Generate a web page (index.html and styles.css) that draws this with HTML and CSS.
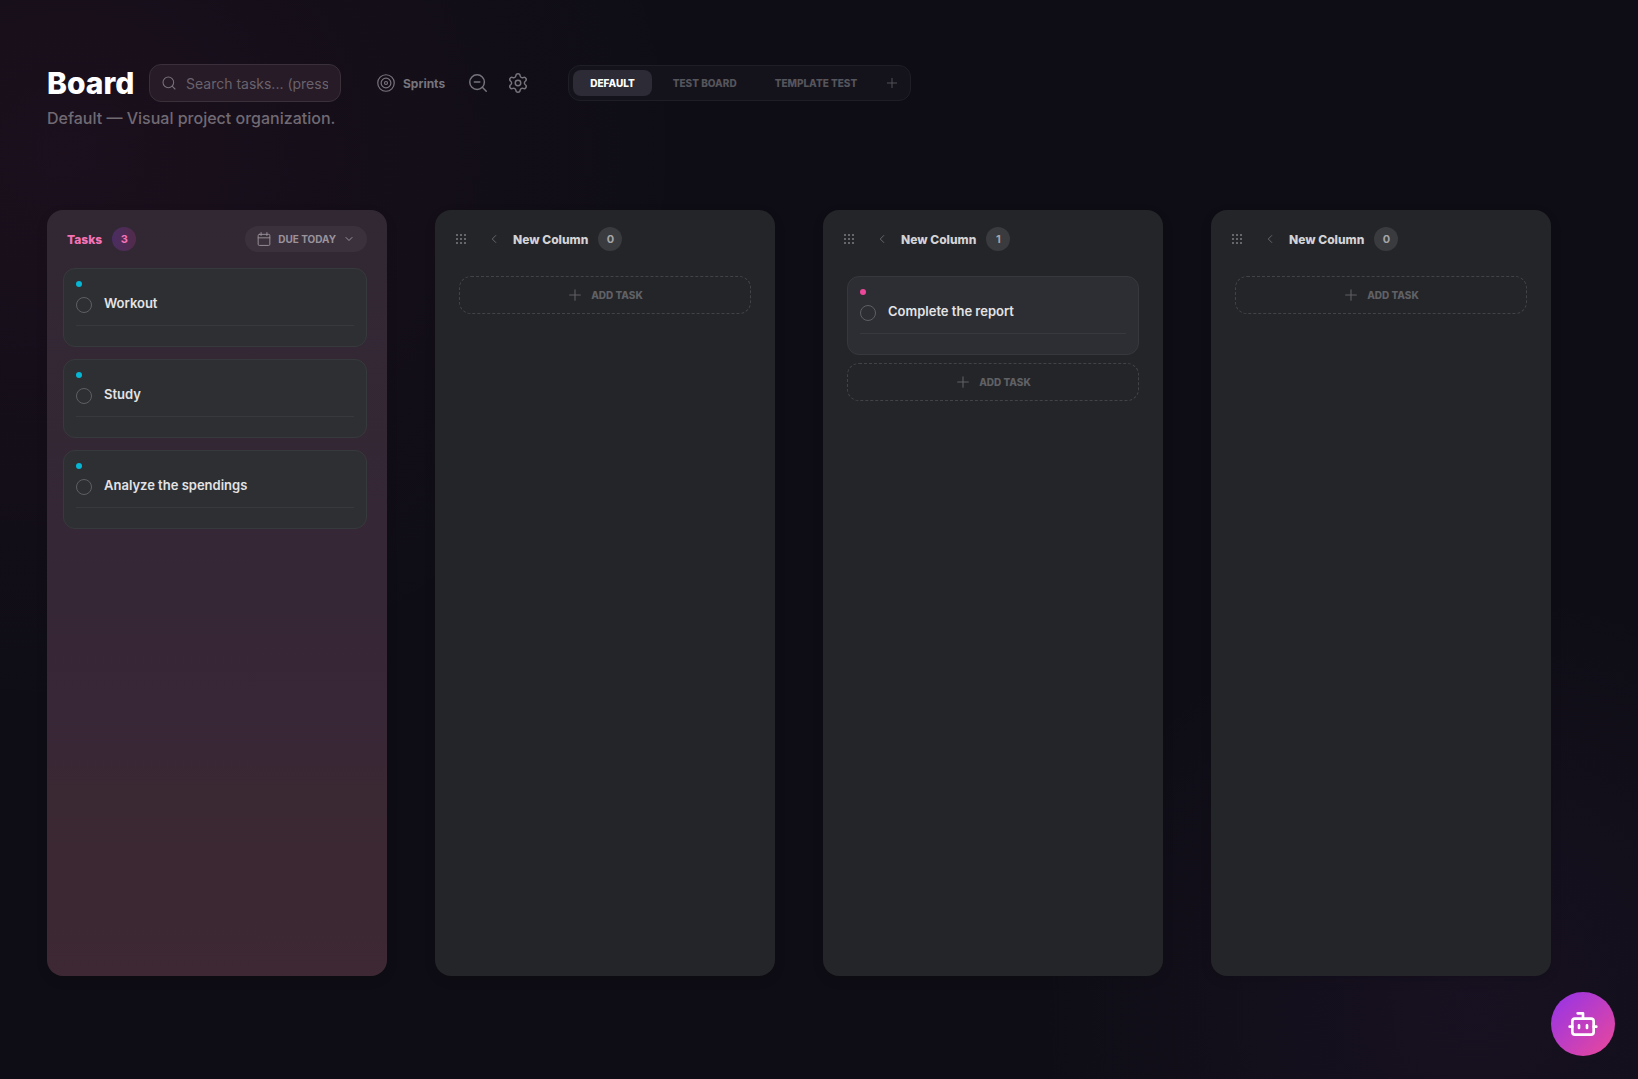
FILE: index.html
```html
<!DOCTYPE html>
<html lang="en">
<head>
<meta charset="utf-8">
<title>Board</title>
<link rel="stylesheet" href="styles.css">
</head>
<body>
<svg class="sprite" aria-hidden="true">
  <symbol id="search" viewBox="0 0 24 24"><circle cx="11" cy="11" r="8"/><path d="m21 21-4.3-4.3"/></symbol>
  <symbol id="target" viewBox="0 0 24 24"><circle cx="12" cy="12" r="11"/><circle cx="12" cy="12" r="6.5"/><circle cx="12" cy="12" r="2"/></symbol>
  <symbol id="zoom-out" viewBox="0 0 24 24"><circle cx="11" cy="11" r="8"/><path d="m21 21-4.3-4.3M8 11h6"/></symbol>
  <symbol id="settings" viewBox="0 0 24 24"><path d="M9.671 4.136a2.34 2.34 0 0 1 4.659 0 2.34 2.34 0 0 0 3.319 1.915 2.34 2.34 0 0 1 2.33 4.033 2.34 2.34 0 0 0 0 3.831 2.34 2.34 0 0 1-2.33 4.033 2.34 2.34 0 0 0-3.319 1.915 2.34 2.34 0 0 1-4.659 0 2.34 2.34 0 0 0-3.32-1.915 2.34 2.34 0 0 1-2.33-4.033 2.34 2.34 0 0 0 0-3.831A2.34 2.34 0 0 1 6.35 6.051a2.34 2.34 0 0 0 3.319-1.915"/><circle cx="12" cy="12" r="3"/></symbol>
  <symbol id="plus" viewBox="0 0 24 24"><path d="M4 12h16M12 4v16"/></symbol>
  <symbol id="left" viewBox="0 0 24 24"><path d="m15 18-6-6 6-6"/></symbol>
  <symbol id="down" viewBox="0 0 24 24"><path d="m6 9 6 6 6-6"/></symbol>
  <symbol id="calendar" viewBox="0 0 24 24"><rect x="2" y="4" width="20" height="19" rx="2"/><path d="M7 1v5M17 1v5M2 10h20"/></symbol>
  <symbol id="grip" viewBox="0 0 10 10"><path d="M0 0h2v2H0zM4 0h2v2H4zM8 0h2v2H8zM0 4h2v2H0zM4 4h2v2H4zM8 4h2v2H8zM0 8h2v2H0zM4 8h2v2H4zM8 8h2v2H8z"/></symbol>
  <symbol id="bot" viewBox="0 0 24 24"><path d="M12 8V4H8"/><rect width="16" height="12" x="4" y="8" rx="2"/><path d="M2 14h2M20 14h2M15 13v2M9 13v2"/></symbol>
</svg>

<div class="page">
  <header class="header">
    <div class="toolbar">
      <h1 class="title">Board</h1>
      <label class="search">
        <svg class="icon icon-16"><use href="#search"/></svg>
        <input class="search-input" type="text" placeholder="Search tasks... (press /)" aria-label="Search tasks">
      </label>
      <div class="tools">
        <button class="tool tool-sprints" type="button"><svg class="icon icon-18"><use href="#target"/></svg>Sprints</button>
        <button class="tool" type="button" aria-label="Zoom out"><svg class="icon icon-22"><use href="#zoom-out"/></svg></button>
        <button class="tool" type="button" aria-label="Settings"><svg class="icon icon-22"><use href="#settings"/></svg></button>
      </div>
      <nav class="tabs" aria-label="Boards">
        <button class="tab tab-active" type="button">DEFAULT</button>
        <button class="tab" type="button">TEST BOARD</button>
        <button class="tab" type="button">TEMPLATE TEST</button>
        <button class="tab-add" type="button" aria-label="Add board"><svg class="icon icon-14"><use href="#plus"/></svg></button>
      </nav>
    </div>
    <p class="subtitle">Default — Visual project organization.</p>
  </header>

  <main class="board">
    <section class="column column-tasks">
      <div class="column-head">
        <h2 class="column-title">Tasks</h2>
        <span class="count">3</span>
        <button class="due" type="button"><svg class="icon icon-14"><use href="#calendar"/></svg>DUE TODAY<svg class="icon icon-12"><use href="#down"/></svg></button>
      </div>
      <div class="cards">
        <article class="card"><span class="dot"></span><label class="task"><input class="check" type="checkbox"><span class="task-name">Workout</span></label></article>
        <article class="card"><span class="dot"></span><label class="task"><input class="check" type="checkbox"><span class="task-name">Study</span></label></article>
        <article class="card"><span class="dot"></span><label class="task"><input class="check" type="checkbox"><span class="task-name">Analyze the spendings</span></label></article>
      </div>
    </section>

    <section class="column">
      <div class="column-head">
        <svg class="grip"><use href="#grip"/></svg>
        <button class="collapse" type="button" aria-label="Collapse column"><svg class="icon icon-14"><use href="#left"/></svg></button>
        <h2 class="column-title">New Column</h2>
        <span class="count">0</span>
      </div>
      <div class="cards">
        <button class="add" type="button"><svg class="icon icon-16"><use href="#plus"/></svg>ADD TASK</button>
      </div>
    </section>

    <section class="column">
      <div class="column-head">
        <svg class="grip"><use href="#grip"/></svg>
        <button class="collapse" type="button" aria-label="Collapse column"><svg class="icon icon-14"><use href="#left"/></svg></button>
        <h2 class="column-title">New Column</h2>
        <span class="count">1</span>
      </div>
      <div class="cards">
        <article class="card card-pink"><span class="dot"></span><label class="task"><input class="check" type="checkbox"><span class="task-name">Complete the report</span></label></article>
        <button class="add" type="button"><svg class="icon icon-16"><use href="#plus"/></svg>ADD TASK</button>
      </div>
    </section>

    <section class="column">
      <div class="column-head">
        <svg class="grip"><use href="#grip"/></svg>
        <button class="collapse" type="button" aria-label="Collapse column"><svg class="icon icon-14"><use href="#left"/></svg></button>
        <h2 class="column-title">New Column</h2>
        <span class="count">0</span>
      </div>
      <div class="cards">
        <button class="add" type="button"><svg class="icon icon-16"><use href="#plus"/></svg>ADD TASK</button>
      </div>
    </section>
  </main>
</div>
<button class="assistant" type="button" aria-label="Open assistant"><svg class="icon icon-32"><use href="#bot"/></svg></button>
</body>
</html>
```

FILE: styles.css
```css
* { box-sizing: border-box; }

body {
  margin: 0;
  color: #e4e4e7;
  font-family: Inter, "Liberation Sans", sans-serif;
  background:
    radial-gradient(ellipse 38% 52% at 4% 14%, rgba(236, 60, 153, 0.06), transparent),
    radial-gradient(ellipse 27% 40% at 90% 94%, rgba(180, 75, 220, 0.06), transparent),
    #0e0d15;
}

h1, h2, p { margin: 0; }

button, input { font-family: inherit; }

button {
  display: flex;
  align-items: center;
  justify-content: center;
  padding: 0;
  border: 0;
  background: none;
  color: inherit;
}

.sprite { display: none; }

.icon {
  flex: none;
  fill: none;
  stroke: currentColor;
  stroke-width: 1.6;
  stroke-linecap: round;
  stroke-linejoin: round;
}
.icon-12 { width: 12px; height: 12px; stroke-width: 2; }
.icon-14 { width: 14px; height: 14px; }
.icon-16 { width: 16px; height: 16px; }
.icon-18 { width: 18px; height: 18px; }
.icon-22 { width: 22px; height: 22px; }
.icon-32 { width: 32px; height: 32px; stroke-width: 2; }

.page {
  display: flex;
  flex-direction: column;
  min-height: 100vh;
  padding: 64px 87px 103px 47px;
}

.header { height: 146px; }

.toolbar {
  display: flex;
  align-items: center;
  height: 38px;
}

.title {
  width: 86px;
  font-size: 30px;
  line-height: 38px;
  font-weight: 800;
  color: #fff;
}

.search {
  display: flex;
  align-items: center;
  gap: 9px;
  width: 192px;
  height: 38px;
  margin-left: 16px;
  padding: 0 12px 0 11px;
  border: 1px solid #393039;
  border-radius: 12px;
  background: #261b27;
  color: #77707a;
}
.search-input {
  flex: 1;
  min-width: 0;
  padding: 0;
  border: 0;
  outline: 0;
  background: none;
  font-size: 14px;
  color: #e4e4e7;
}
.search-input::placeholder { color: #6a626c; }

.tools {
  display: flex;
  align-items: center;
  gap: 18px;
  margin-left: 36px;
  color: #78747c;
}
.tool-sprints {
  gap: 8px;
  margin-right: 4px;
  font-size: 12px;
  font-weight: 700;
}

.tabs {
  display: flex;
  gap: 4px;
  height: 36px;
  margin-left: 39px;
  padding: 4px;
  border: 1px solid #1f1e27;
  border-radius: 12px;
  background: #14131c;
}
.tab {
  padding: 0 17px;
  border-radius: 8px;
  font-size: 10px;
  font-weight: 800;
  color: #56555b;
}
.tab-active { background: #2d2b35; color: #fff; }
.tab-add { width: 28px; color: #56555b; }

.subtitle {
  font-size: 16px;
  line-height: 32px;
  font-weight: 500;
  color: #716a73;
}

.board {
  flex: 1;
  display: grid;
  grid-template-columns: repeat(4, 1fr);
  gap: 48px;
}

.column {
  padding: 16px 24px;
  border-radius: 16px;
  background: #242529;
  box-shadow: 0 4px 12px rgba(0, 0, 0, 0.1);
}

.column-head {
  display: flex;
  align-items: center;
  height: 26px;
}
.grip {
  width: 10px;
  height: 10px;
  margin-left: -3px;
  fill: #66676b;
}
.collapse {
  width: 14px;
  margin: 0 12px 0 21px;
  color: #6a6b6f;
}
.column-title {
  font-size: 12px;
  font-weight: 800;
  color: #d3d3d5;
}
.count {
  width: 24px;
  margin-left: 10px;
  border-radius: 12px;
  background: #3a3b3f;
  color: #a5a5a8;
  font-size: 11px;
  line-height: 24px;
  font-weight: 700;
  text-align: center;
}

.cards {
  display: flex;
  flex-direction: column;
  gap: 8px;
  margin-top: 24px;
}
.card {
  padding: 12px 12px 20px;
  border: 1px solid #37383d;
  border-radius: 12px;
  background: #2d2e33;
}
.dot {
  display: block;
  width: 6px;
  height: 6px;
  border-radius: 3px;
  background: #06b6d4;
}
.card-pink .dot { background: #ec4899; }
.task {
  display: flex;
  align-items: center;
  gap: 12px;
  height: 39px;
  padding-bottom: 2px;
  border-bottom: 1px solid #38393d;
}
.task-name {
  padding-bottom: 4px;
  font-size: 13px;
  font-weight: 600;
  color: #e3e3e5;
}
.check {
  appearance: none;
  width: 16px;
  height: 16px;
  margin: 0;
  border: 1px solid #5e5f62;
  border-radius: 8px;
}
.add {
  gap: 8px;
  height: 38px;
  border: 1px dashed #424347;
  border-radius: 12px;
  font-size: 10px;
  font-weight: 800;
  color: #606165;
}

.column-tasks {
  padding: 16px 20px 16px 16px;
  background: linear-gradient(#312833, #362736 50%, #392736 71%, #3a2832 76%, #3d2833);
}
.column-tasks .column-title { margin-left: 4px; color: #f472b6; }
.column-tasks .count {
  background: linear-gradient(90deg, #4a2d61, #522b4b);
  color: #f472b6;
}
.column-tasks .cards { gap: 12px; margin-top: 16px; }
.column-tasks .card { background: #2d2f33; border-color: #373a3d; }
.due {
  gap: 7px;
  height: 26px;
  margin-left: auto;
  padding: 0 12px;
  border-radius: 13px;
  background: #3b313d;
  color: #9a939b;
  font-size: 10px;
  font-weight: 700;
}

.assistant {
  position: fixed;
  right: 23px;
  bottom: 23px;
  width: 64px;
  height: 64px;
  border-radius: 32px;
  background: linear-gradient(135deg, #9333ea, #ec4899);
  color: #fff;
}
```
